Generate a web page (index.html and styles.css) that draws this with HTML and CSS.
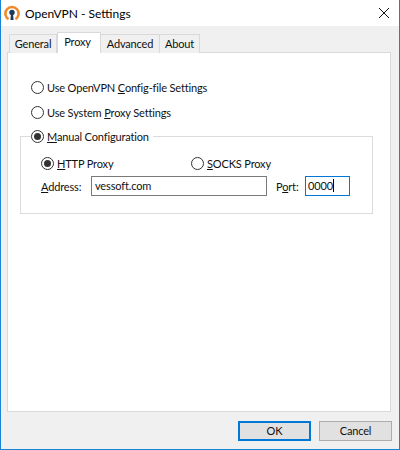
FILE: index.html
```html
<!DOCTYPE html>
<html lang="en">
<head>
  <meta charset="UTF-8">
  <title>OpenVPN - Settings</title>
  <link rel="stylesheet" href="styles.css">
</head>
<body>

  <div class="window">
    <div class="titlebar">
      <svg class="app-icon" width="16" height="16" viewBox="0 0 16 16">
        <path d="M4.600 14.200A6.600 6.600 0 1 1 11.400 14.200" fill="none" stroke="#ee8a2c" stroke-width="2.600"/>
        <circle cx="8" cy="7.400" r="2.700" fill="#1d3a57"/>
        <path d="M7 8.500h2l.6 6.500H6.400z" fill="#1d3a57"/>
      </svg>
      <span class="title">OpenVPN - Settings</span>
      <svg class="close" width="10" height="10" viewBox="0 0 10 10">
        <path d="M0 0L10 10M10 0L0 10" stroke="#111" stroke-width="1" fill="none"/>
      </svg>
    </div>

    <div class="content">
      <div class="tabs">
        <div class="tab tab-general">General</div>
        <div class="tab tab-active tab-proxy">Proxy</div>
        <div class="tab tab-advanced">Advanced</div>
        <div class="tab tab-about">About</div>
      </div>

      <div class="panel">
        <div class="option option-top"><span class="radio"></span><span>Use OpenVPN <u>C</u>onfig-file Settings</span></div>
        <div class="option option-top option-2"><span class="radio"></span><span>Use System <u>P</u>roxy Settings</span></div>

        <fieldset class="group">
          <legend class="option"><span class="radio radio-on"></span><span><u>M</u>anual Configuration</span></legend>
          <div class="proxy-type">
            <div class="option option-http"><span class="radio radio-on"></span><span><u>H</u>TTP Proxy</span></div>
            <div class="option"><span class="radio"></span><span><u>S</u>OCKS Proxy</span></div>
          </div>
          <div class="address-row">
            <span class="label label-address"><u>A</u>ddress:</span>
            <div class="field field-address">vessoft.com</div>
            <span class="label label-port">P<u>o</u>rt:</span>
            <div class="field field-port">0000<span class="caret"></span></div>
          </div>
        </fieldset>
      </div>

      <div class="buttons">
        <div class="button button-default">OK</div>
        <div class="button">Cancel</div>
      </div>
    </div>
  </div>

</body>
</html>
```

FILE: styles.css
```css
* {
  box-sizing: border-box;
}
html, body {
  margin: 0;
  height: 100%;
}
body {
  font-family: Lato, sans-serif;
  font-size: 11px;
  letter-spacing: -0.15px;
  color: #111;
}
.window {
  height: 450px;
  display: flex;
  flex-direction: column;
  border: 1px solid #1883d7;
  border-top: none;
  background: #f0f0f0;
}
.titlebar {
  height: 26px;
  background: white;
  display: flex;
  align-items: center;
  padding: 0 10px 0 3px;
}
.app-icon {
  margin-right: 5px;
}
.title {
  flex: 1;
  color: #000;
  font-size: 12px;
  letter-spacing: 0;
}
.content {
  flex: 1;
  display: flex;
  flex-direction: column;
  padding: 7px 7px 8px 6px;
}
.tabs {
  display: flex;
  height: 20px;
  align-items: flex-end;
  padding-left: 2px;
  position: relative;
  z-index: 1;
  margin-bottom: -1px;
}
.tab {
  height: 19px;
  border: 1px solid #d9d9d9;
  border-bottom: none;
  border-left: none;
  background: #f0f0f0;
  text-align: center;
  line-height: 18px;
}
.tab-general {
  width: 48px;
  border-left: 1px solid #d9d9d9;
}
.tab-proxy {
  width: 44px;
  padding-right: 3px;
}
.tab-advanced {
  width: 59px;
}
.tab-about {
  width: 40px;
}
.tab-active {
  height: 21px;
  background: white;
  border-left: 1px solid #d9d9d9;
  line-height: 18px;
}
.panel {
  flex: 1;
  background: white;
  border: 1px solid #d9d9d9;
  margin-right: 1px;
  padding: 24px 17px 0 12px;
}
.option {
  display: flex;
  align-items: center;
  height: 20px;
  white-space: nowrap;
}
.option-top {
  margin-left: 11px;
}
.option-2 {
  margin-top: 5px;
}
.radio {
  width: 13px;
  height: 13px;
  border: 1px solid #333;
  border-radius: 50%;
  background: white;
  margin-right: 3px;
  flex: none;
  display: flex;
  align-items: center;
  justify-content: center;
}
.radio-on::after {
  content: "";
  width: 7px;
  height: 7px;
  border-radius: 50%;
  background: #333;
}
.group {
  margin: 4px 0 0;
  padding: 7px 20px 0;
  height: 88px;
  border: 1px solid #dcdcdc;
  min-width: 0;
}
.group legend {
  padding: 0 4px 0 0;
  margin: 4px 0 0 -10px;
  display: flex;
}
.proxy-type {
  display: flex;
}
.option-http {
  width: 150px;
}
.address-row {
  display: flex;
  align-items: center;
  margin-top: 3px;
}
.label {
  white-space: nowrap;
}
.label-address {
  width: 50px;
}
.label-port {
  width: 29px;
  margin-left: 9px;
}
.field {
  height: 20px;
  border: 1px solid #7a7a7a;
  background: white;
  padding-left: 3px;
  line-height: 18px;
}
.field-address {
  width: 176px;
}
.field-port {
  width: 45px;
  border-color: #0078d7;
  padding-left: 2px;
}
.caret {
  display: inline-block;
  width: 1px;
  height: 13px;
  background: #000;
  vertical-align: -2px;
}
.buttons {
  display: flex;
  justify-content: flex-end;
  gap: 8px;
  margin-top: 9px;
}
.button {
  width: 73px;
  height: 20px;
  border: 1px solid #adadad;
  background: #e1e1e1;
  text-align: center;
  line-height: 18px;
}
.button-default {
  border: 2px solid #0078d7;
  line-height: 16px;
}
```
